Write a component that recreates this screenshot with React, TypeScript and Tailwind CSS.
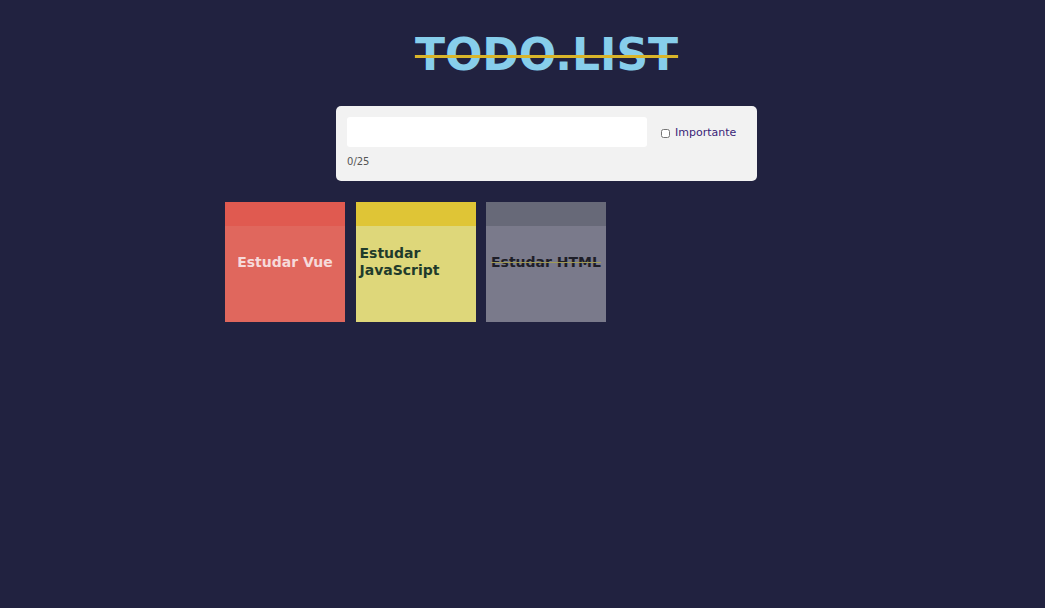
import { useState } from 'react'

type Todo = {
  text: string
  head: string
  body: string
  textColor: string
  align: 'center' | 'left'
  done?: boolean
}

const todos: Todo[] = [
  { text: 'Estudar Vue', head: 'bg-[#e05a50]', body: 'bg-[#e0675d]', textColor: 'text-[#f6dada]', align: 'center' },
  { text: 'Estudar JavaScript', head: 'bg-[#dfc536]', body: 'bg-[#ded77a]', textColor: 'text-[#1f3b2b]', align: 'left' },
  { text: 'Estudar HTML', head: 'bg-[#676978]', body: 'bg-[#7a7a8b]', textColor: 'text-[#1e1e28]', align: 'center', done: true },
]

export default function App() {
  const [value, setValue] = useState('')
  const [important, setImportant] = useState(false)

  return (
    <div className="min-h-screen w-full bg-[#212240] font-['DejaVu_Sans',Verdana,sans-serif] pl-[48px]">
      {/* title */}
      <h1 className="pt-[22px] text-center text-[44px] font-bold text-[#87ceeb] line-through decoration-[#d9b52a] decoration-[3px]">
        TODO.LIST
      </h1>

      {/* form */}
      <div className="mx-auto mt-[18px] w-[421px] h-[75px] rounded-[5px] bg-[#f2f2f2] px-[11px] pt-[11px]">
        <div className="flex items-center">
          <input
            value={value}
            maxLength={25}
            onChange={(e) => setValue(e.target.value)}
            className="h-[30px] w-[300px] rounded-[3px] bg-white px-2 text-sm outline-none"
          />
          <label className="ml-[14px] pt-[3px] flex items-center gap-[5px] text-[11px] text-[#3a1f78]">
            <input
              type="checkbox"
              checked={important}
              onChange={() => setImportant(!important)}
              className="h-[9px] w-[9px]"
            />
            Importante
          </label>
        </div>
        <div className="mt-[7px] text-[10px] text-[#555]">{value.length}/25</div>
      </div>

      {/* cards */}
      <div className="mx-auto mt-[21px] flex w-[643px] gap-[10.5px]">
        {todos.map((t, i) => (
          <div key={i} className={`relative h-[120px] w-[120px] ${t.body} flex items-center ${t.align === 'center' ? 'justify-center text-center' : 'justify-start px-[4px]'}`}>
            <div className={`absolute left-0 right-0 top-0 h-[24px] ${t.head}`} />
            <span className={`relative text-[14px] font-bold leading-[17px] ${t.textColor} ${t.done ? 'line-through decoration-[#9e9a55]' : ''}`}>
              {t.text}
            </span>
          </div>
        ))}
      </div>
    </div>
  )
}
